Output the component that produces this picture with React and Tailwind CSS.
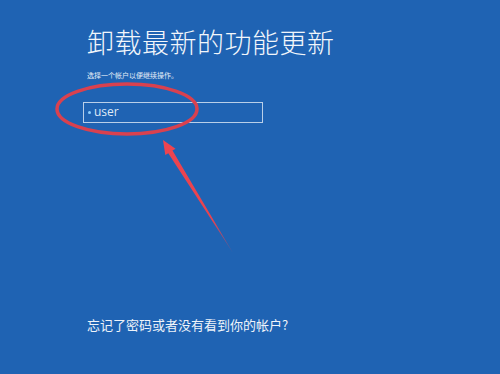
export default function App() {
  const cjk = { fontFamily: '"Noto Sans CJK SC", "Noto Sans", sans-serif' };
  return (
    <div className="relative w-[500px] h-[374px] overflow-hidden bg-[#1f63b3] text-white" style={cjk}>
      <div className="flex flex-col h-full pl-[87px] pt-[23px]">
        <h1 className="text-[27px] leading-[38px] font-light tracking-[0.5px] text-[#f2f6fb]">卸载最新的功能更新</h1>
        <p className="mt-[9px] text-[7px] leading-[10px] text-[#e6eef8]">选择一个帐户以便继续操作。</p>
        <div className="mt-[22px] -ml-[4px] w-[180px] h-[21px] border border-[#b9cfe9] flex items-center pl-[4px] gap-[3px]">
          <span className="w-[3px] h-[3px] rounded-full bg-[#8fd0ff]" />
          <span className="text-[12px] leading-none text-[#dfe9f6] pb-[2px]" style={{ fontFamily: '"Open Sans", "Noto Sans", sans-serif' }}>user</span>
        </div>
        <div className="flex-1" />
        <p className="mb-[40px] text-[13px] leading-[18px] text-[#eef3fa]">忘记了密码或者没有看到你的帐户?</p>
      </div>
      <svg className="absolute inset-0 pointer-events-none" width="500" height="374" viewBox="0 0 500 374">
        <defs>
          <linearGradient id="fade" x1="163" y1="140" x2="233" y2="253" gradientUnits="userSpaceOnUse">
            <stop offset="0" stopColor="#ee4450" />
            <stop offset="0.7" stopColor="#e8434f" />
            <stop offset="1" stopColor="#e8434f" stopOpacity="0.3" />
          </linearGradient>
        </defs>
        <ellipse cx="127" cy="109" rx="70" ry="25" fill="none" stroke="#d9414f" strokeWidth="3.5" />
        <polygon points="163,140 175.5,148.7 172.5,150.6 233,253 168.3,153.2 165.3,155.1" fill="url(#fade)" />
      </svg>
    </div>
  );
}
